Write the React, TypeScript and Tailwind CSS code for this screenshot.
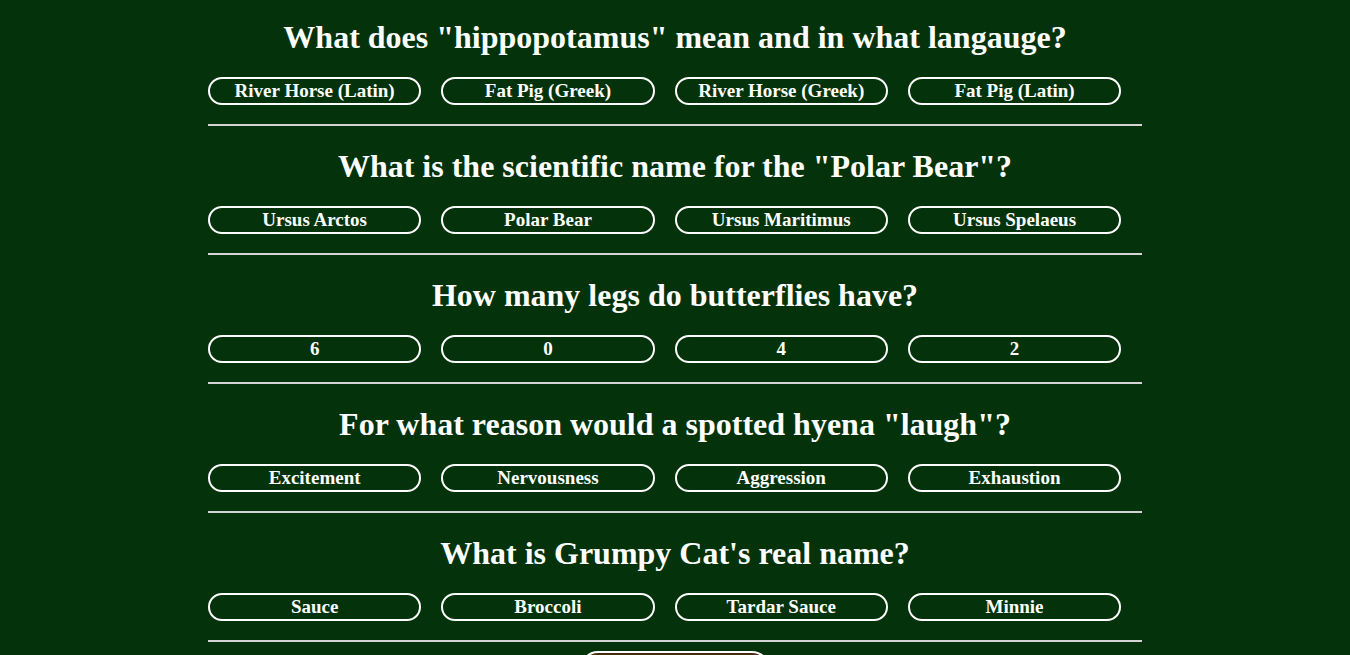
import React from 'react';

const questions = [
    {
        q: 'What does "hippopotamus" mean and in what langauge?',
        a: ['River Horse (Latin)', 'Fat Pig (Greek)', 'River Horse (Greek)', 'Fat Pig (Latin)'],
    },
    {
        q: 'What is the scientific name for the "Polar Bear"?',
        a: ['Ursus Arctos', 'Polar Bear', 'Ursus Maritimus', 'Ursus Spelaeus'],
    },
    {
        q: 'How many legs do butterflies have?',
        a: ['6', '0', '4', '2'],
    },
    {
        q: 'For what reason would a spotted hyena "laugh"?',
        a: ['Excitement', 'Nervousness', 'Aggression', 'Exhaustion'],
    },
    {
        q: "What is Grumpy Cat's real name?",
        a: ['Sauce', 'Broccoli', 'Tardar Sauce', 'Minnie'],
    },
];

const App: React.FC = () => {
    return (
        <div
            className="min-h-screen bg-[#04320a] text-white pb-10"
            style={{ fontFamily: '"Liberation Serif", "Times New Roman", serif' }}
        >
            <div className="w-[934px] mx-auto pt-[19px]">
                {questions.map((item, i) => (
                    <div key={i}>
                        <h2 className="text-center text-[32px] font-bold leading-[37px]">{item.q}</h2>
                        <div className="flex gap-[20px] mt-[21px]">
                            {item.a.map((ans) => (
                                <button
                                    key={ans}
                                    className="w-[213.3px] h-[28px] pb-[1px] border-2 border-white rounded-full text-[19px] font-bold leading-none text-white bg-transparent"
                                >
                                    {ans}
                                </button>
                            ))}
                        </div>
                        <hr className="mt-[19px] mb-[22px] border-0 border-t-2 border-[#d4d4d4]" />
                    </div>
                ))}
                <div className="flex justify-center -mt-[13px]">
                    <button className="w-[190px] h-[36px] border-2 border-white rounded-full bg-[#4a2c14] text-white text-lg font-bold">
                        Submit
                    </button>
                </div>
            </div>
        </div>
    );
};

export default App;
